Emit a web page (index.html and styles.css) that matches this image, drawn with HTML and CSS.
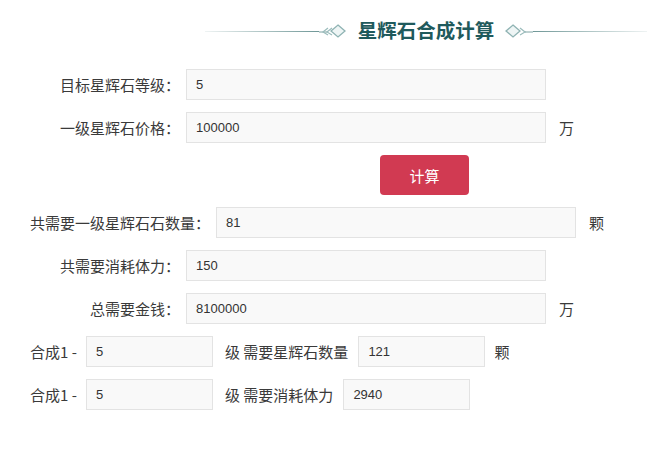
FILE: index.html
```html
<!DOCTYPE html>
<html lang="zh-CN">

<head>
    <meta charset="UTF-8">
    <meta name="viewport" content="width=device-width, initial-scale=1.0">
    <title>星辉石合成计算</title>
    <link rel="stylesheet" href="styles.css">
</head>

<body>
    <div class="page">
        <div class="title-bar">
            <span class="line line-left"></span>
            <svg class="ornament" width="28" height="16" viewBox="0 0 28 16">
                <path d="M0 9 H8" stroke="#7fa3a3" stroke-width="1" fill="none"/>
                <path d="M9 5 L4 9 L9 12" stroke="#9bbcbc" stroke-width="1.2" fill="none"/>
                <path d="M13 5 L8 9 L13 12" stroke="#9bbcbc" stroke-width="1.2" fill="none"/>
                <path d="M19 2 L26 8 L19 14 L12 8 Z" stroke="#8fb3b3" stroke-width="1.3" fill="#eef5f5"/>
            </svg>
            <h1>星辉石合成计算</h1>
            <svg class="ornament" width="28" height="16" viewBox="0 0 28 16">
                <path d="M8 2 L15 8 L8 14 L1 8 Z" stroke="#8fb3b3" stroke-width="1.3" fill="#eef5f5"/>
                <path d="M15 5 L20 9 L15 12" stroke="#9bbcbc" stroke-width="1.2" fill="none"/>
                <path d="M20 9 H28" stroke="#7fa3a3" stroke-width="1" fill="none"/>
            </svg>
            <span class="line line-right"></span>
        </div>

        <div class="row">
            <label class="field-label">目标星辉石等级：</label>
            <input class="field" type="text" value="5">
        </div>
        <div class="row">
            <label class="field-label">一级星辉石价格：</label>
            <input class="field" type="text" value="100000">
            <span class="unit">万</span>
        </div>
        <div class="row button-row">
            <button class="calc-btn">计算</button>
        </div>
        <div class="row">
            <label class="field-label">共需要一级星辉石石数量：</label>
            <input class="field" type="text" value="81">
            <span class="unit">颗</span>
        </div>
        <div class="row">
            <label class="field-label">共需要消耗体力：</label>
            <input class="field" type="text" value="150">
        </div>
        <div class="row">
            <label class="field-label">总需要金钱：</label>
            <input class="field" type="text" value="8100000">
            <span class="unit">万</span>
        </div>
        <div class="row">
            <span class="prefix">合成1 -</span>
            <input class="field small" type="text" value="5">
            <span class="mid">级 需要星辉石数量</span>
            <input class="field small" type="text" value="121">
            <span class="unit unit-near">颗</span>
        </div>
        <div class="row">
            <span class="prefix">合成1 -</span>
            <input class="field small" type="text" value="5">
            <span class="mid">级 需要消耗体力</span>
            <input class="field small" type="text" value="2940">
        </div>
    </div>
</body>

</html>
```

FILE: styles.css
```css
* {
    margin: 0;
    padding: 0;
    box-sizing: border-box;
}

body {
    font-family: "Noto Sans CJK SC", "Liberation Sans", sans-serif;
    font-size: 15px;
    color: #3a3a3a;
    background-color: #fff;
}

.page {
    width: 650px;
    padding-left: 30px;
}

/* Заголовок */
.title-bar {
    display: flex;
    align-items: center;
    height: 60px;
    margin-left: 175px;
    margin-bottom: 9px;
}

.title-bar h1 {
    font-size: 19.5px;
    font-weight: bold;
    color: #1f5a5c;
    margin: 0 11px;
    line-height: 24px;
}

.line {
    flex: 1;
    height: 1px;
    margin-top: 3px;
}

.line-left {
    background: linear-gradient(to right, rgba(95, 140, 140, 0.1), #6f9797);
}

.line-right {
    background: linear-gradient(to left, rgba(95, 140, 140, 0.1), #6f9797);
    margin-right: 3px;
}

.ornament {
    display: block;
    margin-top: 2px;
}

/* Строки формы */
.row {
    display: flex;
    align-items: center;
    height: 31px;
    margin-bottom: 12px;
}

.field-label {
    min-width: 150px;
    text-align: right;
    margin-right: 6px;
    white-space: nowrap;
    line-height: 31px;
}

.field {
    width: 360px;
    height: 31px;
    border: 1px solid #e3e3e3;
    background-color: #f9f9f9;
    padding-left: 9px;
    font-family: "Liberation Sans", Arial, sans-serif;
    font-size: 13px;
    color: #333;
    outline: none;
}

.field.small {
    width: 127px;
}

.unit {
    margin-left: 13px;
}

.unit-near {
    margin-left: 9px;
}

.button-row {
    height: 40px;
    padding-left: 350px;
}

.calc-btn {
    width: 89px;
    height: 40px;
    border: none;
    border-radius: 4px;
    background-color: #d13a52;
    color: #fff;
    font-family: "Noto Sans CJK SC", sans-serif;
    font-size: 15px;
    cursor: pointer;
}

.prefix {
    width: 56px;
    white-space: nowrap;
}

.mid {
    margin-left: 12px;
    margin-right: 10px;
    white-space: nowrap;
}
```
